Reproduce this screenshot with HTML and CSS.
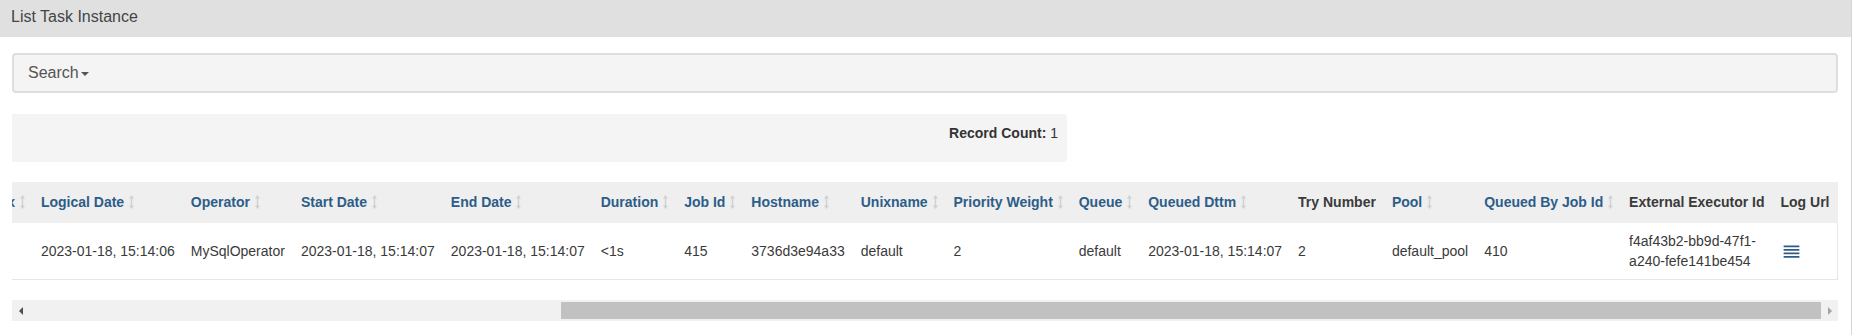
FILE: index.html
```html
<!DOCTYPE html>
<html lang="en">
<head>
    <meta charset="UTF-8">
    <title>List Task Instance</title>
    <link rel="stylesheet" href="styles.css">
</head>
<body>

<div class="panel">
    <!-- Cabecera del listado -->
    <div class="panel-heading">List Task Instance</div>

    <div class="panel-body">
        <!-- Barra de búsqueda -->
        <div class="search-bar">
            <span class="search-toggle">Search<span class="caret"></span></span>
        </div>

        <!-- Contador de registros -->
        <div class="well">
            <strong>Record Count:</strong> 1
        </div>

        <!-- Tabla (desplazada al final, como en el scroll horizontal) -->
        <div class="table-wrap">
            <table class="table">
                <thead>
                    <tr>
                        <th><a href="#">Map Index <svg class="sort-icon" viewBox="0 0 5 14"><path d="M2.5 0L5 3.6H3.2V10.4H5L2.5 14L0 10.4H1.8V3.6H0Z"/></svg></a></th>
                        <th><a href="#">Logical Date <svg class="sort-icon" viewBox="0 0 5 14"><path d="M2.5 0L5 3.6H3.2V10.4H5L2.5 14L0 10.4H1.8V3.6H0Z"/></svg></a></th>
                        <th><a href="#">Operator <svg class="sort-icon" viewBox="0 0 5 14"><path d="M2.5 0L5 3.6H3.2V10.4H5L2.5 14L0 10.4H1.8V3.6H0Z"/></svg></a></th>
                        <th><a href="#">Start Date <svg class="sort-icon" viewBox="0 0 5 14"><path d="M2.5 0L5 3.6H3.2V10.4H5L2.5 14L0 10.4H1.8V3.6H0Z"/></svg></a></th>
                        <th><a href="#">End Date <svg class="sort-icon" viewBox="0 0 5 14"><path d="M2.5 0L5 3.6H3.2V10.4H5L2.5 14L0 10.4H1.8V3.6H0Z"/></svg></a></th>
                        <th><a href="#">Duration <svg class="sort-icon" viewBox="0 0 5 14"><path d="M2.5 0L5 3.6H3.2V10.4H5L2.5 14L0 10.4H1.8V3.6H0Z"/></svg></a></th>
                        <th><a href="#">Job Id <svg class="sort-icon" viewBox="0 0 5 14"><path d="M2.5 0L5 3.6H3.2V10.4H5L2.5 14L0 10.4H1.8V3.6H0Z"/></svg></a></th>
                        <th><a href="#">Hostname <svg class="sort-icon" viewBox="0 0 5 14"><path d="M2.5 0L5 3.6H3.2V10.4H5L2.5 14L0 10.4H1.8V3.6H0Z"/></svg></a></th>
                        <th><a href="#">Unixname <svg class="sort-icon" viewBox="0 0 5 14"><path d="M2.5 0L5 3.6H3.2V10.4H5L2.5 14L0 10.4H1.8V3.6H0Z"/></svg></a></th>
                        <th><a href="#">Priority Weight <svg class="sort-icon" viewBox="0 0 5 14"><path d="M2.5 0L5 3.6H3.2V10.4H5L2.5 14L0 10.4H1.8V3.6H0Z"/></svg></a></th>
                        <th><a href="#">Queue <svg class="sort-icon" viewBox="0 0 5 14"><path d="M2.5 0L5 3.6H3.2V10.4H5L2.5 14L0 10.4H1.8V3.6H0Z"/></svg></a></th>
                        <th><a href="#">Queued Dttm <svg class="sort-icon" viewBox="0 0 5 14"><path d="M2.5 0L5 3.6H3.2V10.4H5L2.5 14L0 10.4H1.8V3.6H0Z"/></svg></a></th>
                        <th>Try Number</th>
                        <th><a href="#">Pool <svg class="sort-icon" viewBox="0 0 5 14"><path d="M2.5 0L5 3.6H3.2V10.4H5L2.5 14L0 10.4H1.8V3.6H0Z"/></svg></a></th>
                        <th><a href="#">Queued By Job Id <svg class="sort-icon" viewBox="0 0 5 14"><path d="M2.5 0L5 3.6H3.2V10.4H5L2.5 14L0 10.4H1.8V3.6H0Z"/></svg></a></th>
                        <th class="shrink">External Executor Id</th>
                        <th>Log Url</th>
                    </tr>
                </thead>
                <tbody>
                    <tr>
                        <td></td>
                        <td>2023-01-18, 15:14:06</td>
                        <td>MySqlOperator</td>
                        <td>2023-01-18, 15:14:07</td>
                        <td>2023-01-18, 15:14:07</td>
                        <td>&lt;1s</td>
                        <td>415</td>
                        <td>3736d3e94a33</td>
                        <td>default</td>
                        <td>2</td>
                        <td>default</td>
                        <td>2023-01-18, 15:14:07</td>
                        <td>2</td>
                        <td>default_pool</td>
                        <td>410</td>
                        <td class="wrap">f4af43b2-bb9d-47f1-a240-fefe141be454</td>
                        <td class="last">
                            <a href="#" class="log-link"><svg class="log-icon" viewBox="0 0 24 24"><path d="M3 15h18v-2H3v2zm0 4h18v-2H3v2zm0-8h18V9H3v2zm0-6v2h18V5H3z"/></svg></a>
                        </td>
                    </tr>
                </tbody>
            </table>
        </div>

        <!-- Barra de desplazamiento horizontal -->
        <div class="hscroll">
            <span class="arrow arrow-left"></span>
            <div class="track"><div class="thumb" style="width: 70.3%;"></div></div>
            <span class="arrow arrow-right"></span>
        </div>
    </div>
</div>

</body>
</html>
```

FILE: styles.css
```css
* {
    margin: 0;
    padding: 0;
    box-sizing: border-box;
}
body {
    font-family: 'Liberation Sans', Arial, sans-serif;
    font-size: 14px;
    line-height: 20px;
    color: #333;
    background-color: white;
    overflow: hidden;
}
a {
    color: #2c5d88;
    text-decoration: none;
}
.panel {
    width: 1852px;
    border-right: 1px solid #d6d6d6;
    min-height: 335px;
}
.panel-heading {
    background-color: #e0e0e0;
    color: #454545;
    font-size: 16px;
    padding: 7px 11px 10px;
    height: 37px;
}
.panel-body {
    padding: 16px 13px 0 12px;
}
.search-bar {
    background-color: #f4f4f4;
    border: 2px solid #dedede;
    border-radius: 4px;
    padding: 8px 14px;
    margin-bottom: 21px;
}
.search-toggle {
    font-size: 16px;
    color: #555;
}
.caret {
    display: inline-block;
    width: 0;
    height: 0;
    margin-left: 2px;
    vertical-align: middle;
    border-top: 4px solid #555;
    border-left: 4px solid transparent;
    border-right: 4px solid transparent;
}
.well {
    width: 1055px;
    background-color: #f4f4f4;
    border-radius: 0 4px 4px 0;
    padding: 9px 9px 19px;
    text-align: right;
    margin-bottom: 20px;
}
.table-wrap {
    display: flex;
    justify-content: flex-end;
    overflow: hidden;
    margin-bottom: 20px;
}
.table {
    flex-shrink: 0;
    border-collapse: collapse;
}
.table th {
    background-color: #efefef;
    padding: 10px 8px 11px;
    text-align: left;
    font-weight: bold;
    white-space: nowrap;
    color: #3a3a3a;
}
.table td {
    padding: 8px;
    vertical-align: middle;
    white-space: nowrap;
    border-bottom: 1px solid #e6e6e6;
    color: #3a3a3a;
}
.table th.shrink {
    width: 1px;
}
.table td.wrap {
    white-space: normal;
}
.table td.last {
    border-right: 1px solid #e6e6e6;
}
.sort-icon {
    width: 5px;
    height: 14px;
    margin-left: 1px;
    fill: #d0d0d0;
    vertical-align: -2px;
}
.log-icon {
    width: 21px;
    height: 21px;
    fill: #2c5d88;
    vertical-align: middle;
}
.hscroll {
    display: flex;
    align-items: center;
    height: 21px;
    background-color: #f1f1f1;
}
.arrow {
    width: 17px;
    height: 21px;
    display: flex;
    align-items: center;
    justify-content: center;
}
.arrow::before {
    content: '';
    width: 0;
    height: 0;
    border-top: 4.5px solid transparent;
    border-bottom: 4.5px solid transparent;
}
.arrow-left::before {
    border-right: 4px solid #505050;
}
.arrow-right::before {
    border-left: 4px solid #a3a3a3;
}
.track {
    flex: 1;
    display: flex;
    justify-content: flex-end;
}
.thumb {
    height: 17px;
    background-color: #c1c1c1;
}
```
